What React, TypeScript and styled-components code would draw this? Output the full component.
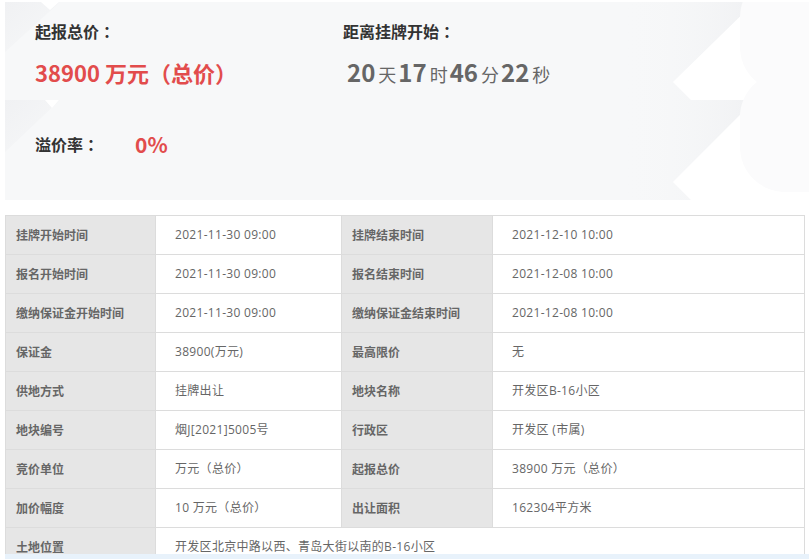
import React from "react";
import styled, { createGlobalStyle } from "styled-components";

const GlobalStyle = createGlobalStyle`
  html, body { margin: 0; padding: 0; background: #fff; }
  body { font-family: "Noto Sans CJK SC", "Noto Sans", sans-serif; overflow: hidden; }
  * { box-sizing: border-box; }
`;

const Page = styled.div`
  width: 809px;
  height: 559px;
  padding: 2px 4px 0 5px;
  display: flex;
  flex-direction: column;
  overflow: hidden;
`;

const TopPanel = styled.section`
  position: relative;
  height: 198px;
  margin-right: -4px;
  background: #f7f8f9;
  padding: 19px 0 0 30px;
  display: grid;
  grid-template-columns: 308px 1fr;
  overflow: hidden;
`;

const Deco = styled.svg`
  position: absolute;
  inset: 0;
  width: 100%;
  height: 100%;
  pointer-events: none;
`;

const Column = styled.div`
  position: relative;
  display: flex;
  flex-direction: column;
`;

const Heading = styled.div`
  font-size: 16px;
  font-weight: 700;
  line-height: 20px;
  color: #333;
  white-space: nowrap;
`;

const Colon = styled.span`
  font-family: "Noto Sans CJK TC", "Noto Sans CJK SC", sans-serif;
`;

const PriceValue = styled.div`
  margin-top: 16px;
  font-size: 22px;
  font-weight: 700;
  line-height: 30px;
  color: #e24c4c;
  white-space: nowrap;
`;

const RateRow = styled.div`
  margin-top: 42px;
  display: flex;
  align-items: center;
  line-height: 30px;
`;

const RateLabel = styled(Heading)`
  width: 100px;
  line-height: 30px;
`;

const RateValue = styled.span`
  font-size: 21px;
  font-weight: 700;
  color: #e24c4c;
`;

const Countdown = styled.div`
  margin-top: 16px;
  padding-left: 4px;
  display: flex;
  align-items: baseline;
  line-height: 30px;
  color: #666;
  white-space: nowrap;
`;

const CountNum = styled.span`
  font-size: 24px;
  font-weight: 700;
  margin-right: 3px;
`;

const CountUnit = styled.span`
  font-size: 18px;
  font-weight: 400;
  margin-right: 2px;
`;

const TableWrap = styled.div`
  margin-top: 15px;
  height: 339px;
  overflow: hidden;
  flex-shrink: 0;
`;

const Grid = styled.div`
  display: grid;
  grid-template-columns: 150px 186px 151px 312px;
  border-top: 1px solid #dcdcdc;
  border-left: 1px solid #dcdcdc;
  width: 800px;
`;

const Cell = styled.div<{ $label?: boolean; $span?: number }>`
  height: 39px;
  display: flex;
  align-items: center;
  border-right: 1px solid #dcdcdc;
  border-bottom: 1px solid #dcdcdc;
  padding: 0 0 2px ${(p) => (p.$label ? "10px" : "19px")};
  background: ${(p) => (p.$label ? "#e6e6e6" : "#fff")};
  font-family: ${(p) =>
    p.$label
      ? `"Noto Sans CJK SC", sans-serif`
      : `"Open Sans", "Noto Sans CJK SC", sans-serif`};
  font-size: 12px;
  letter-spacing: ${(p) => (p.$label ? "0" : "0.3px")};
  font-weight: ${(p) => (p.$label ? 700 : 400)};
  color: #666;
  white-space: nowrap;
  grid-column: ${(p) => (p.$span ? `span ${p.$span}` : "auto")};
`;

const Footer = styled.div`
  flex: 1;
  margin-right: -4px;
  background: #e8f2fb;
`;

const rows: [string, string, string, string][] = [
  ["挂牌开始时间", "2021-11-30 09:00", "挂牌结束时间", "2021-12-10 10:00"],
  ["报名开始时间", "2021-11-30 09:00", "报名结束时间", "2021-12-08 10:00"],
  ["缴纳保证金开始时间", "2021-11-30 09:00", "缴纳保证金结束时间", "2021-12-08 10:00"],
  ["保证金", "38900(万元)", "最高限价", "无"],
  ["供地方式", "挂牌出让", "地块名称", "开发区B-16小区"],
  ["地块编号", "烟J[2021]5005号", "行政区", "开发区 (市属)"],
  ["竞价单位", "万元（总价）", "起报总价", "38900 万元（总价）"],
  ["加价幅度", "10 万元（总价）", "出让面积", "162304平方米"],
];

const countdown: [string, string][] = [
  ["20", "天"],
  ["17", "时"],
  ["46", "分"],
  ["22", "秒"],
];

export default function App() {
  return (
    <>
      <GlobalStyle />
      <Page>
        <TopPanel>
          <Deco viewBox="0 0 804 198" preserveAspectRatio="none">
            <defs>
              <linearGradient id="shade" x1="0" y1="0" x2="1" y2="0">
                <stop offset="0" stopColor="#f7f8f9" stopOpacity="0" />
                <stop offset="1" stopColor="#f0f1f3" stopOpacity="1" />
              </linearGradient>
              <linearGradient id="leftShade" x1="0" y1="0" x2="1" y2="1">
                <stop offset="0" stopColor="#f0f1f3" />
                <stop offset="1" stopColor="#f7f8f9" />
              </linearGradient>
            </defs>
            <polygon points="615,0 750,0 668,80 686,98 615,98" fill="url(#shade)" />
            <polygon points="615,98 750,98 668,180 686,198 615,198" fill="url(#shade)" />
            <polygon points="668,80 750,0 804,0 804,98 686,98" fill="#ffffff" />
            <polygon points="668,180 750,98 804,98 804,198 686,198" fill="#ffffff" />
            <rect x="735" y="-30" width="120" height="120" rx="45" fill="#fbfbfc" />
            <rect x="735" y="70" width="120" height="120" rx="45" fill="#fbfbfc" />
            <polygon points="0,50 0,0 55,0" fill="url(#leftShade)" />
            <polygon points="36,0 54,0 45,8" fill="#ffffff" />
            <polygon points="0,150 0,98 55,98" fill="url(#leftShade)" />
            <polygon points="40,98 54,98 47,106" fill="#ffffff" />
          </Deco>
          <Column>
            <Heading>
              起报总价<Colon>：</Colon>
            </Heading>
            <PriceValue>38900 万元（总价）</PriceValue>
            <RateRow>
              <RateLabel>
                溢价率<Colon>：</Colon>
              </RateLabel>
              <RateValue>0%</RateValue>
            </RateRow>
          </Column>
          <Column>
            <Heading>
              距离挂牌开始<Colon>：</Colon>
            </Heading>
            <Countdown>
              {countdown.map(([n, u]) => (
                <React.Fragment key={u}>
                  <CountNum>{n}</CountNum>
                  <CountUnit>{u}</CountUnit>
                </React.Fragment>
              ))}
            </Countdown>
          </Column>
        </TopPanel>
        <TableWrap>
          <Grid>
            {rows.map((r) => (
              <React.Fragment key={r[0]}>
                <Cell $label>{r[0]}</Cell>
                <Cell>{r[1]}</Cell>
                <Cell $label>{r[2]}</Cell>
                <Cell>{r[3]}</Cell>
              </React.Fragment>
            ))}
            <Cell $label>土地位置</Cell>
            <Cell $span={3}>开发区北京中路以西、青岛大街以南的B-16小区</Cell>
          </Grid>
        </TableWrap>
        <Footer />
      </Page>
    </>
  );
}
